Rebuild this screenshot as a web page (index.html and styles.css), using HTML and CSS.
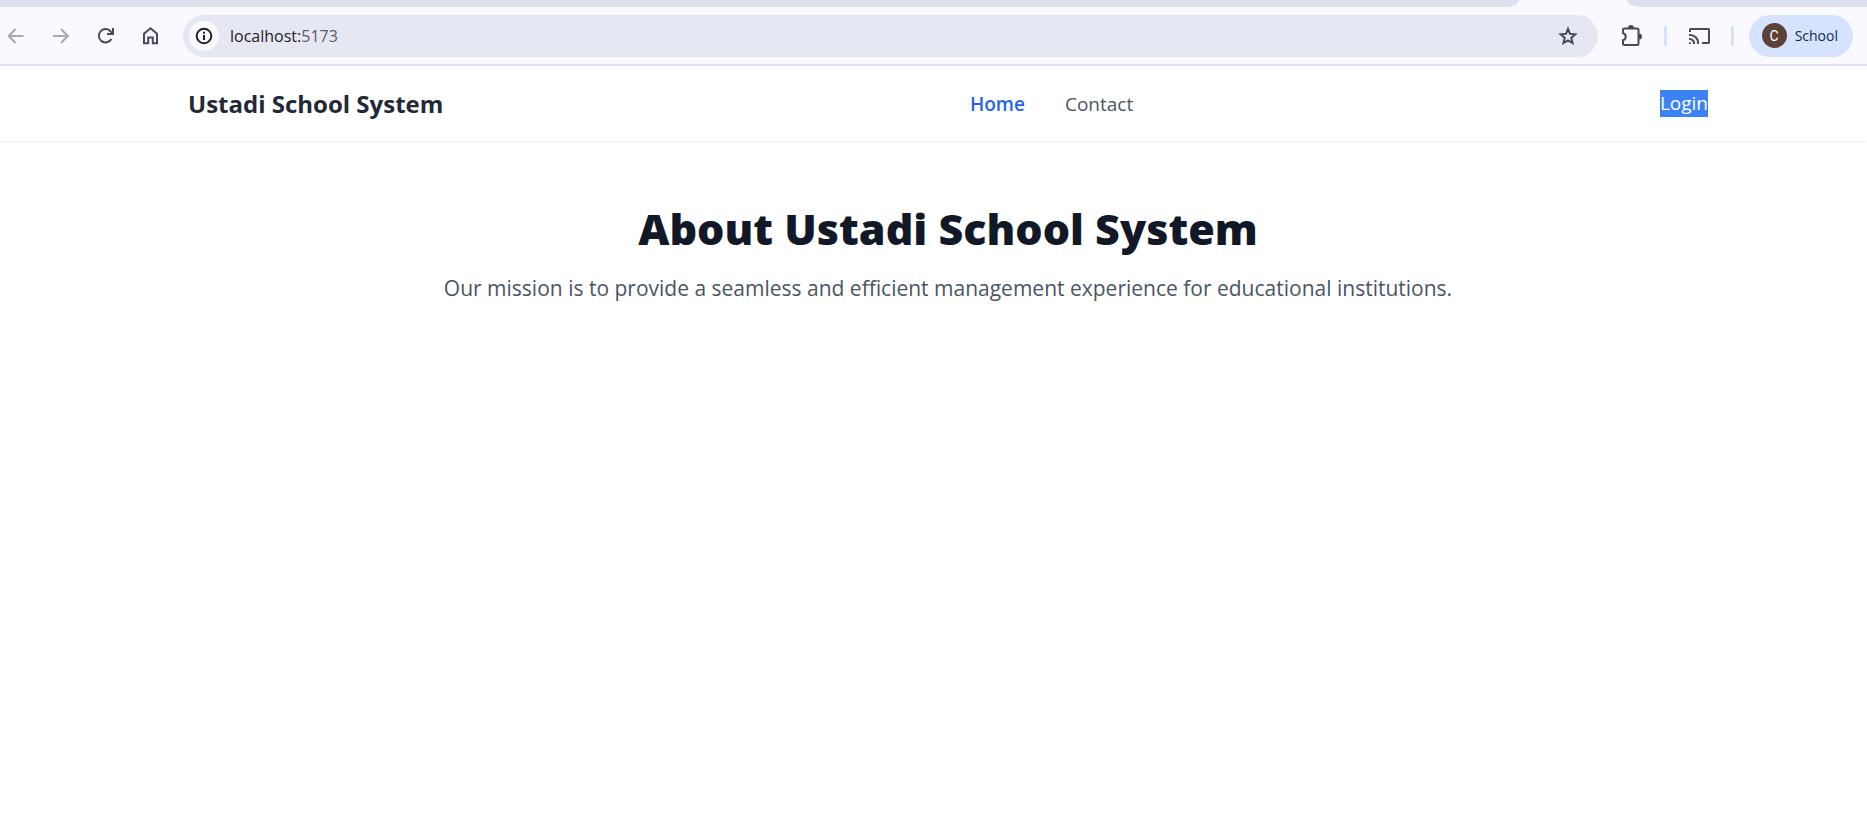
FILE: index.html
```html
<!DOCTYPE html>
<html lang="en">
<head>
<meta charset="utf-8">
<title>Ustadi School System</title>
<link rel="stylesheet" href="styles.css">
</head>
<body>
<div class="tabstrip"><div class="tab-left"></div><div class="tab-right"></div></div>
<div class="toolbar">
  <div class="nav-buttons">
    <button class="icon-btn dim" aria-label="Back"><svg viewBox="0 0 20 20"><path d="M17.5 10H3M9.5 3L2.7 10l6.8 7" /></svg></button>
    <button class="icon-btn dim" aria-label="Forward"><svg viewBox="0 0 20 20"><path d="M2 10h14.500M10 3l6.800 7L10 17" /></svg></button>
    <button class="icon-btn" aria-label="Reload"><svg viewBox="0 0 20 20"><path d="M15.400 13A6.700 6.700 0 1 1 14.800 5.600L17 8M17 2v6h-6" /></svg></button>
    <button class="icon-btn" aria-label="Home"><svg viewBox="0 0 20 20"><path d="M3 17.200V7.800l6.500-5.500L16 7.800v9.400h-4.200v-5.700H7.200v5.700z" /></svg></button>
  </div>
  <div class="address">
    <button class="info" aria-label="View site information"><svg viewBox="0 0 20 20"><circle cx="10" cy="10" r="7.300"/><path d="M10 9v5M10 5.800v2" /></svg></button>
    <div class="url">localhost:<span class="port">5173</span></div>
    <button class="icon-btn star" aria-label="Bookmark"><svg viewBox="0 0 20 20"><path d="M10 3l2 4.900 5.300.5-4 3.500 1.200 5.100L10 14.300 5.500 17l1.200-5.100-4-3.500L8 7.900z" /></svg></button>
  </div>
  <div class="actions">
    <button class="icon-btn wide" aria-label="Extensions"><svg viewBox="0 0 24 24"><path d="M3 9V6q0-1.500 1.500-1.500H17q1.500 0 1.500 1.500v13.500q0 1.500-1.500 1.500H4.500Q3 21 3 19.500v-3.200c3.600-1 3.600-6 0-7.300z" /><path class="solid" d="M8 4a3 3 0 0 1 6 0zM19 9.500a3 3 0 0 1 0 6z"/></svg></button>
    <span class="divider"></span>
    <button class="icon-btn wide" aria-label="Cast"><svg viewBox="0 0 24 24"><path d="M3 8V5.700Q3 5 3.700 5h17.600q.7 0 .7.700v12.600q0 .7-.7.700H15M2 11a8 8 0 0 1 9 9M2 15a4.500 4.500 0 0 1 5 5" /><path class="solid" d="M2 18a2 2 0 0 1 2 2H2z"/></svg></button>
    <span class="divider"></span>
    <button class="profile"><span class="avatar">C</span>School</button>
  </div>
</div>
<div class="page">
  <header class="header">
    <div class="container header-row">
      <a class="brand" href="#">Ustadi School System</a>
      <nav class="links"><a class="link active" href="#">Home</a><a class="link" href="#">Contact</a></nav>
      <a class="login" href="#">Login</a>
    </div>
  </header>
  <main class="container hero">
    <h1 class="title">About Ustadi School System</h1>
    <p class="lead">Our mission is to provide a seamless and efficient management experience for educational institutions.</p>
  </main>
</div>
</body>
</html>
```
FILE: styles.css
```css
* { box-sizing: border-box; }
body { margin: 0; background: #fff; font-family: "Open Sans", "Noto Sans", sans-serif; }
button { border: 0; padding: 0; background: none; font: inherit; color: inherit; }
a { text-decoration: none; }
.tabstrip { display: flex; justify-content: space-between; gap: 108px; height: 7px; background: #f9f9ff; }
.tab-left { flex: 1; background: #dde1ee; border-bottom-right-radius: 14px 7px; }
.tab-right { width: 240px; background: #dde1ee; border-bottom-left-radius: 14px 7px; }
.toolbar { display: flex; align-items: center; gap: 22px; height: 59px; padding: 0 14px 0 6px; background: #f9f9ff; border-bottom: 2px solid #dde1ee; }
.nav-buttons { display: flex; gap: 25px; }
.icon-btn { display: block; width: 20px; height: 20px; color: #454b5c; }
.icon-btn.wide { width: 24px; height: 24px; }
.icon-btn.dim { color: #a8a9b0; }
svg { display: block; width: 100%; height: 100%; fill: none; stroke: currentColor; stroke-width: 2; }
.solid { fill: currentColor; stroke: none; }
.address { flex: 1; display: flex; align-items: center; height: 42px; padding: 0 20px 0 6px; border-radius: 21px; background: #e5e8f3; }
.info { width: 30px; height: 30px; padding: 5px; border-radius: 50%; background: #f9f9ff; color: #202124; }
.url { flex: 1; margin-left: 11px; font-size: 16px; line-height: 24px; color: #1f2024; }
.port { color: #5a5c66; }
.star { color: #45474d; }
.actions { display: flex; align-items: center; gap: 20px; }
.divider { width: 3px; height: 20px; border-radius: 1px; background: #d5e3ff; }
.profile { display: flex; align-items: center; gap: 8px; height: 42px; margin-left: -5px; padding: 0 15px 0 13px; border-radius: 21px; background: #d5e3ff; color: #14294b; font-size: 14px; }
.avatar { display: grid; place-items: center; width: 25px; height: 25px; border-radius: 50%; background: #5d4037; color: #fff; font: 14px Roboto, sans-serif; }
.page { padding-left: 29px; }
.container { max-width: 1520px; margin: 0 auto; }
.header { margin-left: -29px; padding-left: 29px; border-bottom: 1px solid #f3f4f6; box-shadow: 0 1px 2px rgba(0, 0, 0, 0.03); }
.header-row { display: flex; align-items: center; justify-content: space-between; height: 75px; }
.brand { font-size: 24px; font-weight: 700; color: #1f2937; }
.links { display: flex; gap: 40px; }
.link { font-size: 19px; color: #4b5563; }
.link.active { font-weight: 600; color: #2563eb; }
.login { font-size: 19px; line-height: 27px; color: #fff; background: #3b82f6; }
.hero { padding-top: 62px; text-align: center; }
.title { margin: 0; font-size: 43px; line-height: 50px; font-weight: 800; color: #111827; }
.lead { margin: 17px 0 0; font-size: 21px; line-height: 35px; color: #4b5563; }
```
